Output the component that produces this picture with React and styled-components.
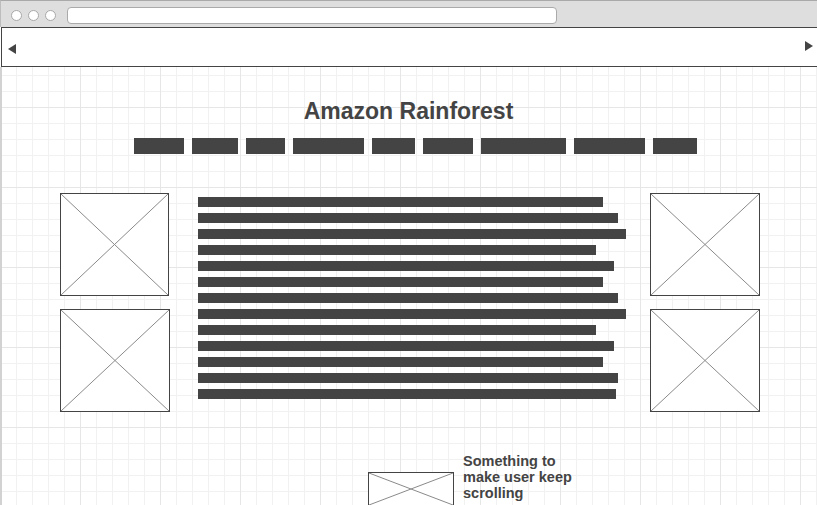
import styled, { createGlobalStyle } from "styled-components"

const GlobalStyle = createGlobalStyle`
  html, body {
    margin: 0;
    padding: 0;
    overflow: hidden;
  }
  body {
    font-family: "Liberation Sans", Arial, sans-serif;
  }
`

const Frame = styled.div`
  width: 817px;
  height: 505px;
  overflow: hidden;
  display: flex;
  flex-direction: column;
  background: #fff;
`

const TitleBar = styled.div`
  height: 27px;
  flex-shrink: 0;
  box-sizing: border-box;
  background: #dedede;
  border-top: 1px solid #a9a9a9;
  border-left: 1px solid #bdbdbd;
  display: flex;
  align-items: center;
  padding-left: 10px;
  gap: 6px;
`

const Dot = styled.span`
  width: 11px;
  height: 11px;
  border-radius: 50%;
  background: #fff;
  border: 1px solid #a8a8a8;
  box-sizing: border-box;
  margin-top: 2px;
`

const UrlBar = styled.div`
  margin-left: 5px;
  width: 490px;
  height: 17px;
  margin-top: 3px;
  background: #fff;
  border: 1px solid #aaa;
  border-radius: 4px;
  box-sizing: border-box;
`

const NavBar = styled.div`
  height: 40px;
  flex-shrink: 0;
  box-sizing: border-box;
  margin-left: 1px;
  border-top: 1px solid #444;
  border-bottom: 1px solid #444;
  border-left: 1px solid #444;
  background: #fff;
  display: flex;
  align-items: center;
  justify-content: space-between;
  padding: 0 4px 0 6px;
`

const Arrow = styled.span`
  width: 0;
  height: 0;
  border-top: 5px solid transparent;
  border-bottom: 5px solid transparent;
  ${p => p.$dir === "left"
    ? "border-right: 8px solid #444;"
    : "border-left: 8px solid #444;"}
  margin-top: ${p => (p.$dir === "left" ? "3px" : "-2px")};
`

const Canvas = styled.div`
  flex: 1;
  box-sizing: border-box;
  border-left: 2px solid #d2d2d2;
  background-color: #fff;
  background-image:
    linear-gradient(#e6e6e6 1px, transparent 1px),
    linear-gradient(90deg, #e6e6e6 1px, transparent 1px),
    linear-gradient(#f1f1f1 1px, transparent 1px),
    linear-gradient(90deg, #f1f1f1 1px, transparent 1px);
  background-size: 80px 80px, 80px 80px, 16px 16px, 16px 16px;
  background-position: -2px -40px, -2px -40px, -2px -40px, -2px -40px;
  padding-top: 31px;
  display: flex;
  flex-direction: column;
  color: #444;
`

const Heading = styled.h1`
  margin: 0 0 0 -2px;
  font-size: 23px;
  line-height: 26px;
  font-weight: bold;
  text-align: center;
`

const Menu = styled.div`
  display: flex;
  gap: 8px;
  margin: 14px 0 0 132px;
`

const MenuItem = styled.span`
  display: block;
  height: 16px;
  width: ${p => p.$w}px;
  background: #444;
`

const ContentRow = styled.div`
  display: flex;
  margin: 39px 0 0 58px;
`

const ImageColumn = styled.div`
  display: flex;
  flex-direction: column;
  gap: 13px;
  width: 110px;
`

const TextColumn = styled.div`
  width: 452px;
  margin-left: 28px;
  padding-top: 4px;
  display: flex;
  flex-direction: column;
  gap: 6px;
`

const TextLine = styled.span`
  display: block;
  height: 10px;
  width: ${p => p.$w}px;
  background: #444;
`

const Placeholder = styled.div`
  box-sizing: border-box;
  width: ${p => p.$w}px;
  height: ${p => p.$h}px;
  border: 1px solid #444;
  background: #fff;
  flex-shrink: 0;

  & svg {
    display: block;
    width: 100%;
    height: 100%;
  }
`

const FooterRow = styled.div`
  display: flex;
  align-items: flex-start;
  margin: 41px 0 0 366px;
  gap: 9px;

  & > ${Placeholder} {
    margin-top: 19px;
  }
`

const FooterText = styled.p`
  margin: 0;
  font-size: 14.5px;
  line-height: 16px;
  font-weight: bold;
  width: 124px;
`

function ImageBox({ w = 110, h = 103 }) {
  return (
    <Placeholder $w={w} $h={h}>
      <svg viewBox="0 0 100 100" preserveAspectRatio="none">
        <line x1="0" y1="0" x2="100" y2="100" stroke="#8a8a8a" strokeWidth="1" vectorEffect="non-scaling-stroke" />
        <line x1="100" y1="0" x2="0" y2="100" stroke="#8a8a8a" strokeWidth="1" vectorEffect="non-scaling-stroke" />
      </svg>
    </Placeholder>
  )
}

const menuWidths = [50, 46, 39, 71, 43, 50, 85, 71, 44]
const lineWidths = [405, 420, 428, 398, 416, 405, 420, 428, 398, 416, 405, 420, 418]

export default function App() {
  return (
    <>
      <GlobalStyle />
      <Frame>
        <TitleBar>
          <Dot />
          <Dot />
          <Dot />
          <UrlBar />
        </TitleBar>
        <NavBar>
          <Arrow $dir="left" />
          <Arrow $dir="right" />
        </NavBar>
        <Canvas>
          <Heading>Amazon Rainforest</Heading>
          <Menu>
            {menuWidths.map((w, i) => (
              <MenuItem key={i} $w={w} />
            ))}
          </Menu>
          <ContentRow>
            <ImageColumn>
              <ImageBox w={109} />
              <ImageBox />
            </ImageColumn>
            <TextColumn>
              {lineWidths.map((w, i) => (
                <TextLine key={i} $w={w} />
              ))}
            </TextColumn>
            <ImageColumn>
              <ImageBox />
              <ImageBox />
            </ImageColumn>
          </ContentRow>
          <FooterRow>
            <ImageBox w={86} h={34} />
            <FooterText>Something to make user keep scrolling</FooterText>
          </FooterRow>
        </Canvas>
      </Frame>
    </>
  )
}
